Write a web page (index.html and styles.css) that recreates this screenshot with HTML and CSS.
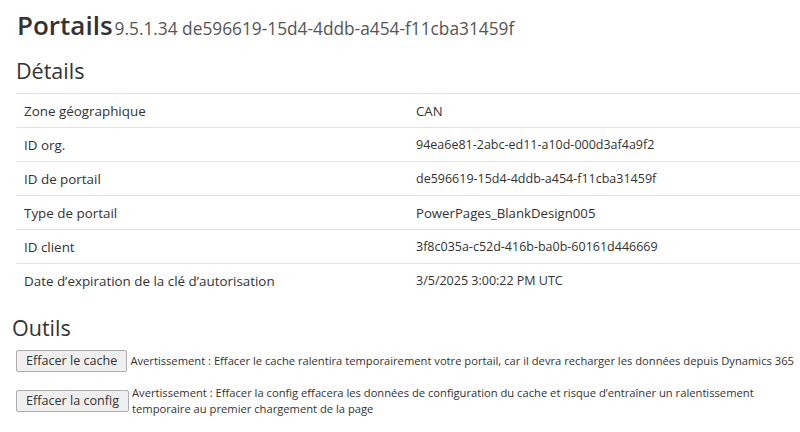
FILE: index.html
```html
<!DOCTYPE html>
<html lang="fr">
<head>
<meta charset="utf-8">
<title>Portails</title>
<link rel="stylesheet" href="styles.css">
</head>
<body>
<header class="title">
  <h1 class="title-main">Portails</h1><span class="title-sub">9.5.1.34 de596619-15d4-4ddb-a454-f11cba31459f</span>
</header>
<section class="details">
  <h2 class="section-heading">Détails</h2>
  <table class="info-table">
    <tr><td class="label">Zone géographique</td><td class="value value-lg">CAN</td></tr>
    <tr><td class="label">ID org.</td><td class="value">94ea6e81-2abc-ed11-a10d-000d3af4a9f2</td></tr>
    <tr><td class="label">ID de portail</td><td class="value">de596619-15d4-4ddb-a454-f11cba31459f</td></tr>
    <tr><td class="label">Type de portail</td><td class="value value-lg">PowerPages_BlankDesign005</td></tr>
    <tr><td class="label">ID client</td><td class="value">3f8c035a-c52d-416b-ba0b-60161d446669</td></tr>
    <tr><td class="label">Date d’expiration de la clé d’autorisation</td><td class="value">3/5/2025 3:00:22 PM UTC</td></tr>
  </table>
</section>
<section class="tools">
  <h2 class="section-heading tools-heading">Outils</h2>
  <div class="tool-row">
    <button class="tool-btn" type="button">Effacer le cache</button>
    <span class="tool-warning">Avertissement : Effacer le cache ralentira temporairement votre portail, car il devra recharger les données depuis Dynamics 365</span>
  </div>
  <div class="tool-row">
    <button class="tool-btn" type="button">Effacer la config</button>
    <span class="tool-warning">Avertissement : Effacer la config effacera les données de configuration du cache et risque d’entraîner un ralentissement temporaire au premier chargement de la page</span>
  </div>
</section>
</body>
</html>
```

FILE: styles.css
```css
html, body {
  margin: 0;
  padding: 0;
  background: #ffffff;
}

body {
  font-family: "Open Sans", "Noto Sans", sans-serif;
  color: #333333;
  padding-left: 16px;
  overflow: hidden;
}

.title {
  display: flex;
  align-items: baseline;
  padding-top: 5px;
  height: 40px;
}

.title-main {
  margin: 0 2px 0 1px;
  font-size: 26px;
  font-weight: 600;
  color: #333333;
  line-height: 40px;
}

.title-sub {
  font-size: 17.3px;
  color: #555555;
}

.section-heading {
  margin: 0;
  font-size: 21.5px;
  font-weight: 400;
  color: #333333;
  line-height: 28px;
}

.details .section-heading {
  margin-top: 12px;
  margin-bottom: 8px;
}

.info-table {
  width: 784px;
  border-collapse: collapse;
  table-layout: fixed;
}

.info-table td {
  width: 50%;
  height: 33px;
  padding: 0 8px;
  border-top: 1px solid #e3e3e3;
  font-size: 13.4px;
  vertical-align: middle;
  white-space: nowrap;
}

.info-table .value {
  font-size: 12.5px;
}

.info-table .value-lg {
  font-size: 13.2px;
}

.tools-heading {
  margin-top: 17px;
  margin-left: -4px;
  margin-bottom: 8px;
}

.tool-row {
  display: flex;
  align-items: center;
  gap: 3px;
  width: 784px;
}

.tool-row + .tool-row {
  margin-top: 13px;
}

.tool-btn {
  flex: none;
  height: 22px;
  padding: 0 9px;
  font-family: "Open Sans", "Noto Sans", sans-serif;
  font-size: 12.6px;
  line-height: 18px;
  color: #333333;
  background: #efefef;
  border: 1px solid #adadad;
  border-radius: 2px;
}

.tool-warning {
  font-size: 11.2px;
  line-height: 16px;
  color: #333333;
}
```
